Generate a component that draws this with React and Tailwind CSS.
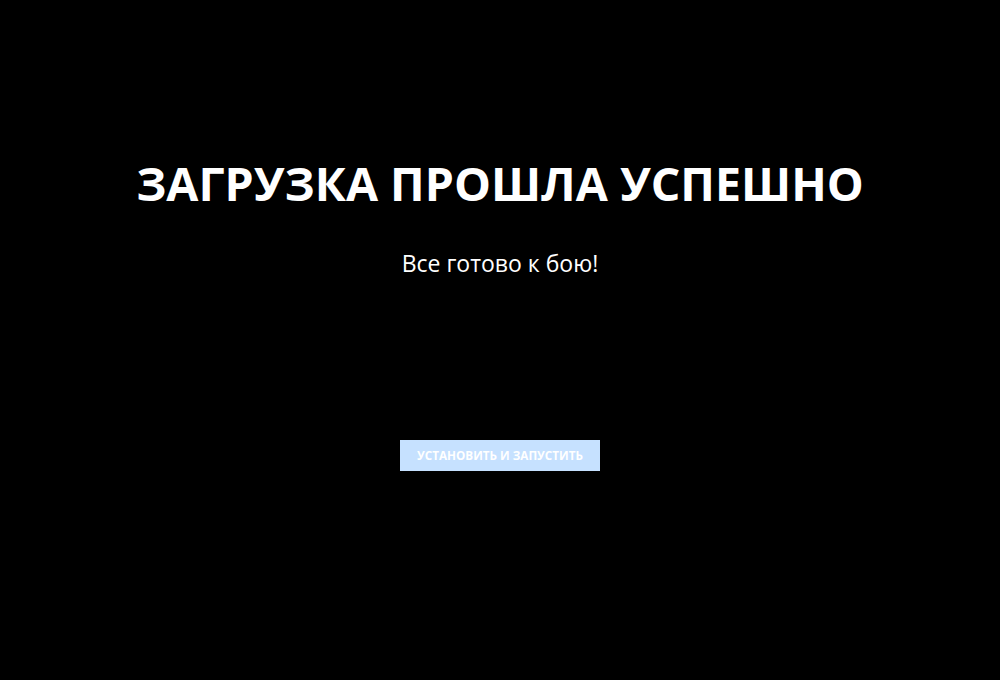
export default function App() {
  return (
    <div className="w-[1000px] h-[680px] bg-black flex flex-col items-center font-['Open_Sans',sans-serif] text-white">
      <h1 className="mt-[155px] text-[46.5px] leading-[56px] font-bold">ЗАГРУЗКА ПРОШЛА УСПЕШНО</h1>
      <p className="mt-[37px] text-[23px] leading-[30px]">Все готово к бою!</p>
      <button className="mt-[162px] w-[200px] h-[31px] bg-[#c6e1ff] text-white text-[11.7px] font-bold">
        УСТАНОВИТЬ И ЗАПУСТИТЬ
      </button>
    </div>
  );
}
